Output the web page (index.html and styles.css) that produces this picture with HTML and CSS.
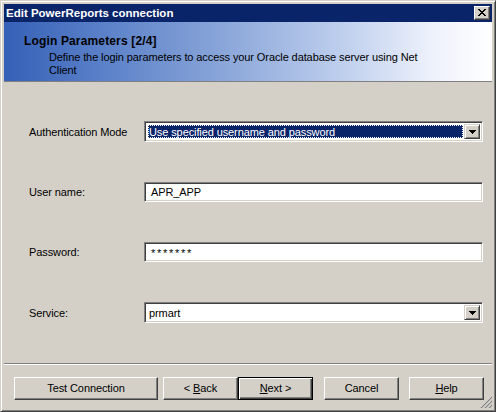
FILE: index.html
```html
<!DOCTYPE html>
<html>
<head>
<meta charset="utf-8">
<link rel="stylesheet" href="styles.css">
</head>
<body>
<div class="window">
  <div class="titlebar">
    <span class="title">Edit PowerReports connection</span>
    <span class="close"><svg width="8" height="7" viewBox="0 0 8 7"><path d="M0 0h2v1h-2zM6 0h2v1h-2zM1 1h2v1h-2zM5 1h2v1h-2zM2 2h4v1h-4zM3 3h2v1h-2zM2 4h4v1h-4zM1 5h2v1h-2zM5 5h2v1h-2zM0 6h2v1h-2zM6 6h2v1h-2z" fill="#000"/></svg></span>
  </div>
  <div class="banner">
    <div class="banner-title">Login Parameters [2/4]</div>
    <div class="banner-desc">Define the login parameters to access your Oracle database server using Net<br>Client</div>
  </div>
  <div class="form">
    <div class="label">Authentication Mode</div>
    <div class="field combo">
      <span class="combo-value selected"><span class="focus">Use specified username and password</span></span>
      <span class="drop"><svg width="7" height="4" viewBox="0 0 7 4"><path d="M0 0h7v1h-7zM1 1h5v1h-5zM2 2h3v1h-3zM3 3h1v1h-1z" fill="#000"/></svg></span>
    </div>
    <div class="label">User name:</div>
    <div class="field text">APR_APP</div>
    <div class="label">Password:</div>
    <div class="field text pw">*******</div>
    <div class="label">Service:</div>
    <div class="field combo">
      <span class="combo-value">prmart</span>
      <span class="drop"><svg width="7" height="4" viewBox="0 0 7 4"><path d="M0 0h7v1h-7zM1 1h5v1h-5zM2 2h3v1h-3zM3 3h1v1h-1z" fill="#000"/></svg></span>
    </div>
  </div>
  <div class="separator"></div>
  <div class="buttons">
    <span class="btn wide"><span>Test Connection</span></span>
    <span class="btn back"><span>&lt; <u>B</u>ack</span></span>
    <span class="btn default"><span><u>N</u>ext &gt;</span></span>
    <span class="btn cancel"><span>Cancel</span></span>
    <span class="btn help"><span><u>H</u>elp</span></span>
  </div>
  <svg class="grip" width="12" height="12" viewBox="0 0 12 12">
    <path d="M11 1L1 11M11 5L5 11M11 9L9 11" stroke="#fff" stroke-width="1"/>
    <path d="M12 1L1 12M12 5L5 12M12 9L9 12" stroke="#808080" stroke-width="1.2"/>
  </svg>
</div>
</body>
</html>
```
FILE: styles.css
```css
html, body {
  margin: 0;
  padding: 0;
  background: #d4d0c8;
}
body {
  font-family: "Liberation Sans", Arial, sans-serif;
  font-size: 11px;
  letter-spacing: -0.1px;
  color: #000;
}
.window {
  position: relative;
  width: 496px;
  height: 412px;
  box-sizing: border-box;
  background: #d4d0c8;
  border: 1px solid;
  border-color: #d4d0c8 #404040 #404040 #d4d0c8;
  box-shadow: inset 1px 1px #fff, inset -1px -1px #808080;
  padding: 3px;
  display: flex;
  flex-direction: column;
}
.titlebar {
  height: 18px;
  background: #0a246a;
  color: #fff;
  display: flex;
  align-items: center;
  justify-content: space-between;
  padding: 0 2px 0 2px;
}
.title {
  font-weight: bold;
  font-size: 11.5px;
  letter-spacing: 0px;
}
.close {
  width: 16px;
  height: 14px;
  box-sizing: border-box;
  background: #d4d0c8;
  border: 1px solid;
  border-color: #fff #404040 #404040 #fff;
  box-shadow: inset -1px -1px #808080;
  display: flex;
  align-items: center;
  justify-content: center;
  padding: 0 1px 1px 0;
}
.close svg { display: block; }
.banner {
  box-sizing: border-box;
  height: 60px;
  border-bottom: 1px solid #808080;
  background: linear-gradient(to right, #3560b6 0%, #5a80c8 20%, #8aa6d9 45%, #c0d0ee 70%, #eef2fb 88%, #fff 100%);
  padding: 13px 0 0 20px;
}
.banner-title {
  font-weight: bold;
  font-size: 12px;
  letter-spacing: 0.15px;
  line-height: 13px;
}
.banner-desc {
  padding-left: 25px;
  line-height: 13px;
  margin-top: 3px;
}
.form {
  flex: 1;
  display: grid;
  grid-template-columns: 115px 339px;
  grid-template-rows: 21px 20px 20px 21px;
  row-gap: 40px;
  padding: 39px 0 0 25px;
  align-content: start;
}
.label {
  display: flex;
  align-items: center;
  white-space: nowrap;
}
.field {
  box-sizing: border-box;
  border: 1px solid;
  border-color: #808080 #fff #fff #808080;
  box-shadow: inset 1px 1px #404040, inset -1px -1px #d4d0c8;
  background: #fff;
  display: flex;
  align-items: center;
}
.text {
  padding: 0 5px 0 6px;
}
.pw {
  letter-spacing: 1.7px;
  padding-top: 1px;
}
.combo {
  padding: 2px;
}
.combo-value {
  flex: 1;
  height: 100%;
  display: flex;
  align-items: center;
  padding-left: 2px;
}
.combo-value.selected {
  padding: 1px;
  box-sizing: border-box;
}
.focus {
  flex: 1;
  height: 100%;
  box-sizing: border-box;
  background: #0a246a;
  color: #fff;
  outline: 1px dotted #fff;
  outline-offset: -1px;
  display: flex;
  align-items: center;
  padding-left: 1px;
}
.drop {
  width: 16px;
  height: 100%;
  box-sizing: border-box;
  background: #d4d0c8;
  border: 1px solid;
  border-color: #d4d0c8 #404040 #404040 #d4d0c8;
  box-shadow: inset 1px 1px #fff, inset -1px -1px #808080;
  display: flex;
  align-items: center;
  justify-content: center;
}
.drop svg { display: block; }
.separator {
  height: 1px;
  border-top: 1px solid #808080;
  background: #fff;
}
.buttons {
  display: flex;
  padding: 12px 0 8px 10px;
}
.btn {
  width: 75px;
  height: 23px;
  box-sizing: border-box;
  border: 1px solid;
  border-color: #fff #404040 #404040 #fff;
  box-shadow: inset -1px -1px #808080;
  display: flex;
  align-items: center;
  justify-content: center;
  padding-bottom: 1px;
  white-space: pre;
}
.btn u { text-decoration: underline; text-underline-offset: 1px; }
.wide { width: 144px; }
.back { margin-left: 5px; }
.default {
  border: 1px solid #000;
  box-shadow: inset 1px 1px #fff, inset -1px -1px #404040, inset -2px -2px #808080;
}
.cancel { margin-left: 11px; }
.help { margin-left: 10px; }
.grip {
  position: absolute;
  right: 3px;
  bottom: 3px;
}
```
